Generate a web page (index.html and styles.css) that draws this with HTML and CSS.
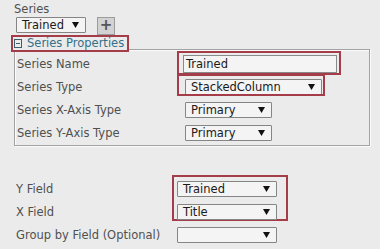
FILE: index.html
```html
<!DOCTYPE html>
<html>
<head>
<meta charset="utf-8">
<link rel="stylesheet" href="styles.css">
</head>
<body>
<div class="page">
  <div class="series-label">Series</div>
  <div class="series-bar">
    <div class="select w-series"><span>Trained</span><svg class="arrow" width="7" height="6" viewBox="0 0 7 6"><polygon points="0,0 7,0 3.5,6"/></svg></div>
    <div class="add-btn">+</div>
  </div>
  <div class="legend"><span class="toggle"><span class="minus"></span></span><span class="legend-text">Series Properties</span></div>
  <div class="props">
    <div class="label">Series Name</div>
    <div class="ctl"><span class="annot annot-name"><span class="input">Trained</span></span></div>
    <div class="label">Series Type</div>
    <div class="ctl"><span class="annot annot-type"><span class="select w-type"><span>StackedColumn</span><svg class="arrow" width="7" height="6" viewBox="0 0 7 6"><polygon points="0,0 7,0 3.5,6"/></svg></span></span></div>
    <div class="label">Series X-Axis Type</div>
    <div class="ctl"><span class="select w-axis"><span>Primary</span><svg class="arrow" width="7" height="6" viewBox="0 0 7 6"><polygon points="0,0 7,0 3.5,6"/></svg></span></div>
    <div class="label">Series Y-Axis Type</div>
    <div class="ctl"><span class="select w-axis"><span>Primary</span><svg class="arrow" width="7" height="6" viewBox="0 0 7 6"><polygon points="0,0 7,0 3.5,6"/></svg></span></div>
  </div>
  <div class="fields">
    <div class="annot-box"></div>
    <div class="label r1">Y Field</div>
    <div class="ctl r1"><span class="select w-field"><span>Trained</span><svg class="arrow" width="7" height="6" viewBox="0 0 7 6"><polygon points="0,0 7,0 3.5,6"/></svg></span></div>
    <div class="label r2">X Field</div>
    <div class="ctl r2"><span class="select w-field"><span>Title</span><svg class="arrow" width="7" height="6" viewBox="0 0 7 6"><polygon points="0,0 7,0 3.5,6"/></svg></span></div>
    <div class="label r3">Group by Field (Optional)</div>
    <div class="ctl r3"><span class="select w-field"><span></span><svg class="arrow" width="7" height="6" viewBox="0 0 7 6"><polygon points="0,0 7,0 3.5,6"/></svg></span></div>
  </div>
</div>
</body>
</html>
```

FILE: styles.css
```css
html, body {
  margin: 0;
  padding: 0;
  background: #ebebeb;
}
.page {
  width: 380px;
  height: 249px;
  overflow: hidden;
  font-family: "DejaVu Sans", Verdana, sans-serif;
  font-size: 11.5px;
  color: #505050;
}
.series-label {
  padding: 2px 0 0 14px;
  line-height: 14px;
}
.series-bar {
  display: flex;
  align-items: flex-start;
  margin: 1px 0 0 16px;
  height: 18px;
}
.select {
  display: flex;
  align-items: center;
  justify-content: space-between;
  box-sizing: border-box;
  height: 16px;
  border: 1px solid #858585;
  border-radius: 1px;
  background: #f4f4f4;
  padding: 0 6px 0 5px;
  color: #1a1a1a;
  line-height: 14px;
}
.arrow {
  display: block;
  fill: #111;
  flex: none;
}
.w-series { width: 70px; }
.w-type { width: 137px; }
.w-axis { width: 87px; margin-left: 2px; }
.w-field { width: 100px; }
.add-btn {
  box-sizing: border-box;
  width: 18px;
  height: 18px;
  margin-left: 11px;
  border: 1px solid #9c9c9c;
  background: #d2d2d2;
  color: #555;
  font-weight: bold;
  font-size: 15px;
  line-height: 15px;
  text-align: center;
}
.legend {
  position: relative;
  z-index: 1;
  display: flex;
  align-items: center;
  box-sizing: border-box;
  width: 118px;
  height: 17px;
  margin: 0 0 -3px 11px;
  border: 2px solid #a53c4a;
  background: #ebebeb;
  padding-left: 1px;
}
.toggle {
  position: relative;
  box-sizing: border-box;
  width: 8px;
  height: 9px;
  border: 1px solid #3c5f6e;
  flex: none;
}
.minus {
  position: absolute;
  left: 1px;
  right: 1px;
  top: 3px;
  height: 1px;
  background: #3c5f6e;
}
.legend-text {
  margin-left: 5px;
  color: #33708a;
  line-height: 13px;
}
.props {
  display: grid;
  grid-template-columns: 166px auto;
  grid-auto-rows: 23px;
  box-sizing: border-box;
  width: 356px;
  margin-left: 14px;
  padding: 2px 0 1px 2px;
  border: 1px solid #a2a2a2;
  box-shadow: 1px 1px 0 #fbfbfb, inset 1px 1px 0 #fbfbfb;
}
.label {
  display: flex;
  align-items: center;
  white-space: nowrap;
}
.ctl {
  display: flex;
  align-items: center;
}
.annot {
  position: relative;
  display: inline-flex;
}
.annot::after {
  content: "";
  position: absolute;
  box-sizing: border-box;
  border: 2px solid #a53c4a;
}
.annot-name::after { top: -4px; left: -6px; right: -4px; bottom: -2px; }
.annot-type { margin-left: 2px; }
.annot-type::after { top: -5px; left: -8px; right: -3px; bottom: -1px; }
.input {
  box-sizing: border-box;
  width: 154px;
  height: 18px;
  border: 1px solid #8a8a8a;
  background: #f4f4f4;
  padding-left: 2px;
  color: #1a1a1a;
  line-height: 16px;
}
.fields {
  display: grid;
  grid-template-columns: 161px auto;
  grid-template-rows: 23px 23px 23px;
  margin: 31px 0 0 16px;
}
.r1 { grid-row: 1; }
.r2 { grid-row: 2; }
.r3 { grid-row: 3; }
.label.r1, .label.r2, .label.r3 { grid-column: 1; }
.ctl.r1, .ctl.r2, .ctl.r3 { grid-column: 2; }
.annot-box {
  grid-row: 1 / 3;
  grid-column: 2;
  align-self: start;
  justify-self: start;
  box-sizing: border-box;
  width: 116px;
  height: 46px;
  margin: -2px 0 0 -5px;
  border: 2px solid #a53c4a;
}
```
